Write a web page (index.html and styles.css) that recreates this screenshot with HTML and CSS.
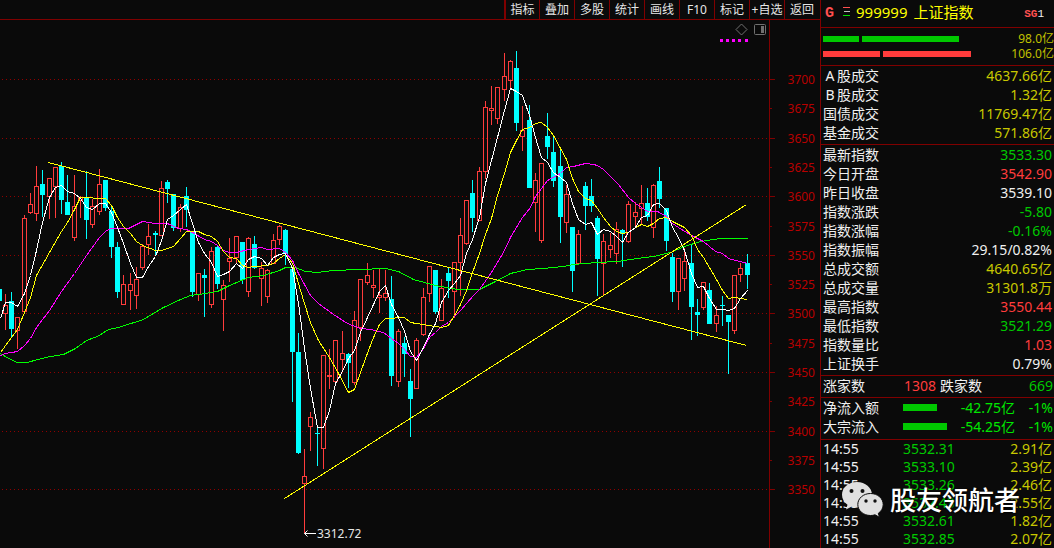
FILE: index.html
```
<!DOCTYPE html>
<html lang="zh-CN">
<head>
<meta charset="utf-8">
<title>上证指数 999999</title>
<link rel="stylesheet" href="styles.css">
</head>
<body>
<div class="terminal">
  <main class="main">
    <nav class="toolbar">
      <button class="tool">指标</button>
      <button class="tool">叠加</button>
      <button class="tool">多股</button>
      <button class="tool">统计</button>
      <button class="tool">画线</button>
      <button class="tool">F10</button>
      <button class="tool">标记</button>
      <button class="tool">+自选</button>
      <button class="tool">返回</button>
    </nav>
    <svg class="chart" viewBox="0 20 820 528" role="img" aria-label="上证指数K线图">
      <g id="grid"></g>
      <g id="candles"></g>
      <g id="averages"></g>
      <g class="line trend">
        <path d="M48.500 162.500L746.500 345.500"/>
        <path d="M284.500 498.500L746.500 204.500"/>
      </g>
      <path class="arrow" d="M304.500 533.500H316M307.500 530.500L304.500 533.500L307.500 536.500"/>
      <text class="low-label" x="317" y="538">3312.72</text>
      <path class="glyph" d="M736 29.500L741.500 24L747 29.500L741.500 35Z"/>
      <rect class="glyph" x="754.500" y="24.500" width="11" height="10" rx="1"/>
      <rect class="glyph-fill" x="761" y="26" width="3" height="7"/>
      <path class="dots" d="M720 40.500h3m3 0h3m3 0h3m3 0h3m4 0h3"/>
    </svg>
  </main>

  <aside class="quote">
    <header class="quote-head">
      <span class="mark">G</span>
      <svg class="menu" viewBox="0 0 7 10"><path class="m-red" d="M0 .5h7"/><path class="m-gray" d="M1 4.500h6"/><path class="m-green" d="M0 8.500h7"/></svg>
      <h1 class="title"><span>999999</span><span>上证指数</span></h1>
      <span class="badge"><b>SG</b>1</span>
    </header>

    <section class="block depth">
      <div class="depth-row"><span class="bar green w36"></span><span class="bar green w97"></span><span class="depth-value">98.0亿</span></div>
      <div class="depth-row"><span class="bar red w57"></span><span class="bar red w88"></span><span class="depth-value">106.0亿</span></div>
    </section>

    <table class="block rows turnover">
      <tr><th><span class="letter">A</span>股成交</th><td class="t-yellow">4637.66亿</td></tr>
      <tr><th><span class="letter">B</span>股成交</th><td class="t-yellow">1.32亿</td></tr>
      <tr><th>国债成交</th><td class="t-yellow">11769.47亿</td></tr>
      <tr><th>基金成交</th><td class="t-yellow">571.86亿</td></tr>
    </table>
    <table class="block rows">
      <tr><th>最新指数</th><td class="t-green">3533.30</td></tr>
      <tr><th>今日开盘</th><td class="t-red">3542.90</td></tr>
      <tr><th>昨日收盘</th><td>3539.10</td></tr>
      <tr><th>指数涨跌</th><td class="t-green">-5.80</td></tr>
      <tr><th>指数涨幅</th><td class="t-green">-0.16%</td></tr>
      <tr><th>指数振幅</th><td>29.15/0.82%</td></tr>
      <tr><th>总成交额</th><td class="t-yellow">4640.65亿</td></tr>
      <tr><th>总成交量</th><td class="t-yellow">31301.8万</td></tr>
      <tr><th>最高指数</th><td class="t-red">3550.44</td></tr>
      <tr><th>最低指数</th><td class="t-green">3521.29</td></tr>
      <tr><th>指数量比</th><td class="t-red">1.03</td></tr>
      <tr><th>上证换手</th><td>0.79%</td></tr>
    </table>

    <section class="block breadth">
      <span class="b-label">涨家数</span><span class="t-red">1308</span><span class="b-down">跌家数</span><span class="b-count t-green">669</span>
    </section>

    <table class="block rows flow">
      <tr><th>净流入额</th><td class="meter"><span class="bar green w34"></span></td><td class="t-lime">-42.75亿</td><td class="t-lime pct">-1%</td></tr>
      <tr><th>大宗流入</th><td class="meter"><span class="bar green w44"></span></td><td class="t-lime">-54.25亿</td><td class="t-lime pct">-1%</td></tr>
    </table>

    <table class="rows tape">
      <tr><th>14:55</th><td class="price">3532.31</td><td class="t-yellow">2.91亿</td></tr>
      <tr><th>14:55</th><td class="price">3533.10</td><td class="t-yellow">2.39亿</td></tr>
      <tr><th>14:55</th><td class="price">3533.26</td><td class="t-yellow">2.46亿</td></tr>
      <tr><th>14:55</th><td class="price">3532.43</td><td class="t-yellow">2.55亿</td></tr>
      <tr><th>14:55</th><td class="price">3532.61</td><td class="t-yellow">1.82亿</td></tr>
      <tr><th>14:55</th><td class="price">3532.85</td><td class="t-yellow">2.07亿</td></tr>
    </table>

    <div class="watermark">
      <svg class="wechat" viewBox="0 0 42 36">
        <path class="w-body" d="M15 0C6.500 0 0 5.600 0 12.800c0 4 2.100 7.500 5.500 9.900L4 27.500l5.400-2.800c1.800.5 3.500.8 5.600.8 8.300 0 15-5.700 15-12.700S23.300 0 15 0Z"/>
        <circle class="w-eye" cx="9.500" cy="9" r="2"/><circle class="w-eye" cx="20.500" cy="9" r="2"/>
        <path class="w-body w-front" d="M28.500 11.500c-7.200 0-12.700 4.900-12.700 11s5.500 11 12.700 11c1.600 0 3.100-.2 4.500-.7l4.500 2.500-1.200-4c3-2 4.900-5.200 4.900-8.800 0-6.100-5.500-11-12.700-11Z"/>
        <circle class="w-eye" cx="24" cy="19" r="1.700"/><circle class="w-eye" cx="33" cy="19" r="1.700"/>
      </svg>
      <span>股友领航者</span>
    </div>
  </aside>
</div>
<script src="chart.js"></script>
</body>
</html>
```

FILE: styles.css
```
* { box-sizing: border-box; }

body {
  margin: 0;
  background: #0a0a0a;
  color: #f0f0f0;
  font-family: "Noto Sans", "Noto Sans CJK SC", sans-serif;
  font-size: 14px;
}

.terminal {
  display: grid;
  grid-template-columns: minmax(0, 1fr) 234px;
  min-height: 100vh;
}

/* toolbar */
.toolbar {
  display: flex;
  justify-content: flex-end;
  height: 20px;
  padding-right: 1px;
  border-bottom: 1px solid #800000;
}
.tool {
  width: 35px;
  padding: 0;
  border: 0;
  border-left: 1px solid #800000;
  background: none;
  color: #e6e6e6;
  font: 12px/17px "Noto Sans", "Noto Sans CJK SC", sans-serif;
  white-space: nowrap;
}
.tool:first-child { border-left-width: 2px; }

/* chart */
.chart { display: block; width: 100%; height: auto; }
.grid-line { stroke: #900000; stroke-dasharray: 1 3; shape-rendering: crispEdges; }
.axis { stroke: #800000; shape-rendering: crispEdges; }
.axis-label { fill: #b80000; font-size: 12px; text-anchor: end; }
.up { fill: none; stroke: #ff3c3c; shape-rendering: crispEdges; }
.down { fill: #00ffff; stroke: none; shape-rendering: crispEdges; }
.line { fill: none; stroke-width: 1; shape-rendering: crispEdges; }
.ma-short { stroke: #ffffff; }
.ma-mid { stroke: #ffff00; }
.ma-long { stroke: #ff00ff; }
.ma-base { stroke: #00ff00; }
.trend { stroke: #ffff00; }
.arrow { fill: none; stroke: #ffffff; }
.low-label { fill: #e6e6e6; font-size: 12px; }
.glyph { fill: none; stroke: #707070; }
.glyph-fill { fill: #707070; }
.dots { stroke: #ff00ff; stroke-width: 3; shape-rendering: crispEdges; }

/* quote panel */
.quote {
  position: relative;
  border-left: 1px solid #800000;
}
.quote-head {
  display: flex;
  align-items: center;
  height: 28px;
  padding: 0 10px 3px 4px;
  border-bottom: 1px solid #800000;
}
.mark {
  width: 18px;
  padding-top: 2px;
  color: #ff5050;
  font: bold 15px "Liberation Mono", monospace;
}
.menu { width: 7px; height: 10px; margin-right: 6px; fill: none; shape-rendering: crispEdges; }
.m-red { stroke: #ff5050; }
.m-gray { stroke: #c0c0c0; }
.m-green { stroke: #00e000; }
.title {
  display: flex;
  gap: 6px;
  margin: 0;
  color: #ffff00;
  font-size: 15px;
  font-weight: 400;
  line-height: 24px;
}
.badge {
  margin-left: auto;
  padding-top: 4px;
  font: 11px "Liberation Mono", monospace;
}
.badge b { color: #ff5050; }

.block { border-bottom: 1px solid #800000; }
.bar { display: block; height: 6px; }
.green { background: #00c800; }
.red { background: #ff3c3c; }
.w34 { width: 34px; }
.w36 { width: 36px; }
.w44 { width: 44px; }
.w57 { width: 57px; }
.w88 { width: 88px; }
.w97 { width: 97px; }

.depth { padding: 3px 0 4px 2px; }
.depth-row { display: flex; align-items: center; gap: 3px; height: 15px; }
.depth-value { margin-left: auto; color: #c0c000; font-size: 12px; line-height: 15px; }

.rows {
  width: 100%;
  border-collapse: separate;
  border-spacing: 0;
  padding: 0 2px 2px 2px;
}
.rows th, .rows td { padding: 0; height: 19px; line-height: 19px; white-space: nowrap; }
.rows th { font-weight: 400; text-align: left; width: 80px; }
.rows td { text-align: right; }
.letter { display: inline-block; width: 14px; text-align: center; }

.t-yellow { color: #c8c800; }
.t-green { color: #00c800; }
.t-lime { color: #00e600; }
.t-red { color: #ff3c3c; }

.breadth {
  display: flex;
  padding: 0 1px 1px 2px;
  line-height: 20px;
}
.b-label { width: 81px; }
.b-down { margin-left: 4px; }
.b-count { margin-left: auto; }

.flow { padding: 0 1px 3px 2px; }
.flow .bar { height: 7px; }
.flow .meter { width: 44px; }
.flow .pct { width: 38px; }

.tape { padding-bottom: 0; }
.tape th, .tape td { height: 18px; line-height: 18px; }
.tape .price { color: #00c800; text-align: left; }

.watermark {
  position: absolute;
  right: 34px;
  bottom: 30px;
  display: flex;
  align-items: center;
  gap: 6px;
  color: #ffffff;
  font-size: 26px;
  font-weight: 500;
  line-height: 36px;
  text-shadow: 1px 1px 2px #000000;
  white-space: nowrap;
}
.wechat { width: 42px; height: 36px; overflow: visible; }
.w-body { fill: #e0e0e0; }
.w-front { stroke: #0a0a0a; stroke-width: 1; }
.w-eye { fill: #101010; }
```

FILE: chart.js
```
const NS = 'http://www.w3.org/2000/svg';

function add(parent, tag, attrs, text) {
  const el = document.createElementNS(NS, tag);
  for (const key in attrs) el.setAttribute(key, attrs[key]);
  if (text) el.textContent = text;
  parent.appendChild(el);
}

// Price scale
const grid = document.getElementById('grid');
add(grid, 'path', { class: 'axis', d: 'M769.5 20V548' });
for (let i = 0; i < 15; i++) {
  const price = 3700 - i * 25;
  const y = Math.round(79 + i * 29.3) + 0.5;
  const major = i % 2 === 0;
  if (major) add(grid, 'path', { class: 'grid-line', d: `M2 ${y}H769` });
  add(grid, 'path', { class: 'axis', d: `M770 ${y}h${major ? 5 : 2}` });
  add(grid, 'text', { class: 'axis-label', x: 815, y: y + 4 }, String(price));
}

// Candles: x, direction, high, body top, body bottom, low
const candles = `-1 C 289 289 301 301|5 R 294 305 314 330|11 C 292 301 329 337|17 R 317 317 331 349|24 R 215 218 312 312|30 R 193 204 213 214
36 R 166 186 214 221|42 C 170 184 195 217|49 R 178 178 197 219|55 R 167 167 187 218|61 C 162 166 200 214|67 C 175 202 215 215|74 R 175 206 238 241
80 R 196 197 201 218|86 C 171 197 220 239|92 R 199 206 225 228|99 R 169 184 212 215|105 C 180 180 208 211|111 C 205 211 247 258
117 C 242 247 292 298|123 R 275 284 305 305|130 R 273 284 291 310|136 R 267 279 296 309|142 R 244 246 268 270|148 R 224 236 245 255
155 C 231 233 235 255|161 R 181 188 236 236|167 C 180 182 189 203|173 C 194 194 228 231|180 R 204 207 229 232|186 C 187 196 210 227
192 C 231 231 292 297|198 R 273 273 295 301|204 C 269 275 278 317|211 R 247 251 305 308|217 C 245 247 284 289|223 R 280 285 300 331
229 R 238 258 262 282|236 R 236 236 258 264|242 C 242 242 280 284|248 R 237 238 292 297|254 C 236 244 268 269|261 R 262 268 279 306
267 R 269 270 297 303|273 R 234 240 264 264|279 R 225 226 240 245|285 C 229 230 254 265|292 C 268 269 352 402|298 C 333 352 453 454
304 R 449 476 484 533|310 R 412 417 427 451|317 C 426 433 434 466|323 R 355 355 449 469|329 R 349 375 377 389|335 R 340 340 382 383
342 R 331 353 360 370|348 C 353 354 363 388|354 R 311 320 383 385|360 R 279 279 328 341|367 R 263 275 283 285|373 R 270 285 288 298
379 R 268 295 298 313|385 R 270 293 298 301|391 C 276 299 376 386|398 R 329 331 382 387|404 C 337 343 354 377|410 C 369 381 399 437
416 R 338 340 389 389|423 R 288 297 335 336|429 R 266 266 294 302|435 C 270 270 312 314|441 R 279 288 321 321|448 C 268 273 281 298
454 R 262 262 292 318|460 R 218 235 263 296|466 R 200 200 244 245|472 C 180 193 218 232|479 R 167 171 221 221|485 R 101 107 172 179
491 R 86 108 111 125|497 R 87 87 119 124|504 R 53 76 90 101|510 R 60 61 81 90|516 C 51 68 123 131|522 R 106 130 137 151
529 C 105 120 188 188|535 R 173 180 203 232|541 R 163 163 241 243|547 C 113 136 147 159|553 C 136 152 181 187|560 C 149 166 217 243
566 R 185 194 223 233|572 C 227 227 271 292|578 R 230 234 264 264|585 C 182 186 206 230|591 C 179 196 206 212|597 C 216 218 259 296
603 R 234 241 264 295|610 R 233 245 250 258|616 R 222 229 254 264|622 C 229 230 234 267|628 R 201 204 242 243|635 R 202 212 217 226
641 R 185 203 209 224|647 C 188 203 217 221|653 R 184 185 228 238|659 C 167 181 199 208|666 C 208 208 241 251|672 C 253 257 292 302
678 R 258 258 292 310|684 R 248 261 279 291|691 C 244 263 307 340|697 C 299 312 315 336|703 R 282 282 308 310|709 C 283 290 324 324
716 R 306 315 324 332|722 C 296 305 306 326|728 C 315 315 322 374|734 R 275 275 331 334|740 R 263 268 275 282|747 C 254 263 275 289`;

const layer = document.getElementById('candles');
candles.split(/[|\n]/).forEach(row => {
  const [xs, kind, ...levels] = row.split(' ');
  const x = Number(xs);
  const [high, top, bottom, low] = levels.map(Number);
  if (kind === 'C') {
    add(layer, 'path', { class: 'down', d: `M${x} ${high}h1V${low}h-1ZM${x - 2} ${top}h5V${bottom}h-5Z` });
  } else {
    add(layer, 'path', { class: 'up', d: `M${x + 0.5} ${high}V${top}M${x + 0.5} ${bottom}V${low}M${x - 1.5} ${top + 0.5}h4V${bottom - 0.5}h-4Z` });
  }
});

// Moving averages as x,y pairs
const averages = {
  'ma-base': '0,353 8,358 17,362 27,362 37,359 50,356 63,354 75,348 86,340 97,336 108,329 118,327 143,319 163,307 180,299 190,295 205,293 217,291 229,285 248,277 263,275 279,270 285,267 295,267 305,271 317,272 333,270 385,268 398,271 413,279 435,285 457,289 479,289 493,282 510,273 527,269 542,268 563,266 573,264 597,262 617,261 637,258 653,256 670,252 684,246 700,241 713,239 720,238 747,238',
  'ma-long': '0,355 5,353 17,351 24,345 30,338 36,327 49,310 61,291 74,273 86,255 99,237 105,231 110,228 128,228 142,221 155,223 167,223 178,228 186,229 192,232 204,239 211,241 217,245 223,250 229,252 236,252 248,249 261,247 267,249 279,248 285,252 292,260 298,273 310,295 318,303 333,314 347,323 360,328 370,329 383,332 391,338 398,343 404,349 410,356 416,357 423,348 429,337 435,332 441,326 448,322 460,310 473,295 479,289 491,272 504,250 510,237 522,217 530,207 535,196 547,180 560,173 566,167 573,166 585,163 593,164 597,165 603,169 618,184 628,197 635,203 641,207 647,211 657,211 666,216 672,223 678,227 691,235 703,241 715,251 722,253 728,258 747,263',
  'ma-mid': '0,352 11,337 17,329 24,312 30,297 36,275 49,252 61,231 67,222 74,209 80,197 105,198 111,205 117,217 123,226 130,233 136,241 142,245 155,250 161,250 173,246 180,238 186,231 193,231 198,231 204,234 211,236 217,241 223,251 229,257 236,258 242,265 248,267 254,266 267,265 273,263 279,258 285,254 292,263 298,283 304,303 310,322 318,340 329,357 338,373 348,392 354,389 360,372 368,350 373,337 379,324 385,318 404,317 410,322 416,323 435,326 441,327 448,325 454,315 460,304 466,290 472,272 479,253 485,234 491,218 497,195 504,173 510,152 516,140 522,129 529,127 535,123 541,122 547,127 553,135 560,148 566,159 572,178 578,191 585,198 591,200 597,208 603,217 610,226 616,231 622,233 628,232 635,227 641,224 647,226 653,223 659,218 666,217 672,221 684,227 691,235 697,249 703,257 709,267 716,279 722,290 728,298 734,297 747,299',
  'ma-short': '0,318 5,302 11,302 17,306 24,293 30,275 36,250 42,222 49,197 55,187 61,185 67,191 74,193 80,198 86,207 92,209 99,203 105,203 111,212 117,227 123,243 130,263 136,277 142,277 148,266 155,256 161,240 167,219 173,215 180,209 186,204 192,223 198,242 204,253 211,262 217,276 223,274 229,271 236,263 242,268 248,259 254,256 261,258 267,265 273,257 279,254 285,253 292,268 298,303 304,348 310,388 317,427 323,427 329,410 335,383 342,371 348,358 354,350 360,332 367,317 373,304 379,291 385,285 391,304 398,317 404,331 410,351 416,360 423,347 429,334 435,323 441,302 448,290 454,283 460,275 466,253 472,239 479,217 485,183 491,160 497,137 504,110 510,88 516,91 522,95 529,115 535,137 541,157 547,162 553,172 560,177 566,182 572,203 578,219 585,224 591,222 597,234 603,229 610,231 616,236 622,242 628,232 635,227 641,217 647,215 653,204 659,203 666,210 672,227 678,237 684,250 691,273 697,287 703,286 709,298 716,309 722,309 728,310 734,308 740,298 747,290'
};
const lines = document.getElementById('averages');
for (const name in averages) {
  const points = averages[name].split(' ').map(p => p.split(',').map(n => Number(n) + 0.5).join(',')).join(' ');
  add(lines, 'polyline', { class: 'line ' + name, points });
}
```
